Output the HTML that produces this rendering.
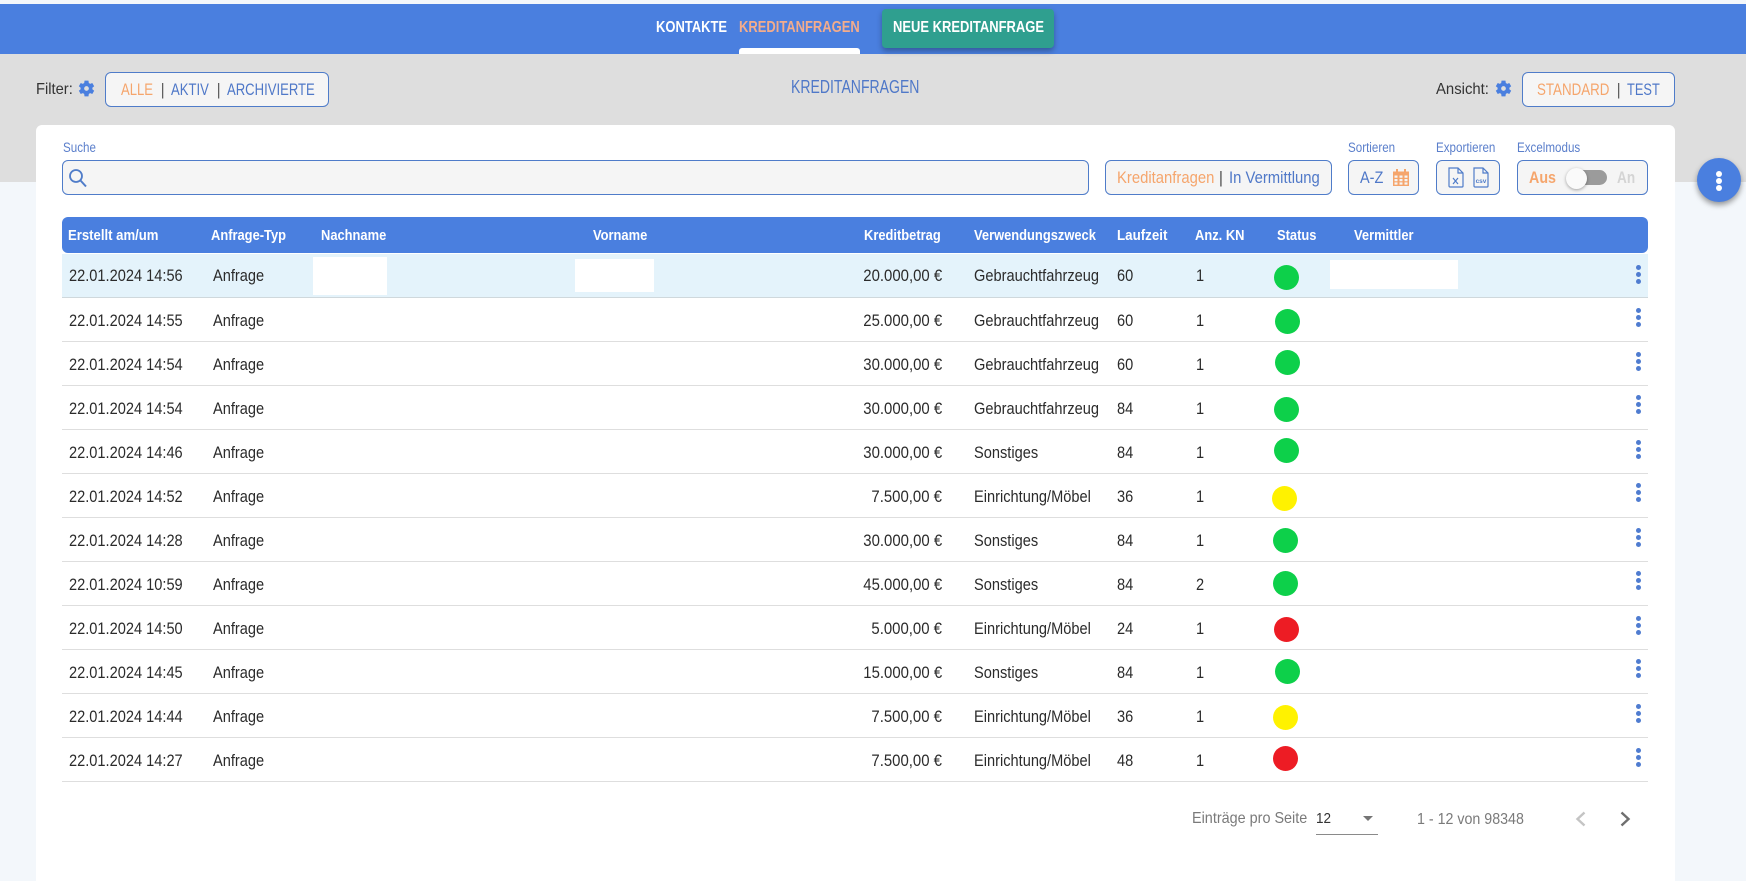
<!DOCTYPE html>
<html lang="de"><head><meta charset="utf-8"><title>Kreditanfragen</title>
<style>
html,body{margin:0;padding:0}
body{width:1746px;height:881px;overflow:hidden;position:relative;background:#f3f7fb;font-family:"Liberation Sans",sans-serif;font-size:15.5px;color:#2b2b2b}
.a{position:absolute;white-space:nowrap}
.t{position:absolute;white-space:nowrap;line-height:20px;height:20px;transform-origin:0 50%}
.btn{position:absolute;box-sizing:border-box;border:1.3px solid #4f7cc9;border-radius:6px;background:#f5f5f5}
.o{color:#f5a56c}.b{color:#4f78c8}.sep{color:#444}
.lab{position:absolute;font-size:13.5px;line-height:16px;color:#5b7fcb;white-space:nowrap;transform:scaleX(.86);transform-origin:0 50%}
.th{position:absolute;top:218px;line-height:36px;color:#fff;font-weight:bold;font-size:15px;white-space:nowrap;transform:scaleX(.86);transform-origin:0 50%}
.r{position:absolute;left:62px;width:1586px;box-sizing:border-box;border-bottom:1.4px solid #dedede;height:44px;font-size:16.5px}
.r span{position:absolute;top:12.5px;line-height:20px;white-space:nowrap;transform:scaleX(.885);transform-origin:0 50%}
.d{left:7px}.ty{left:151px}.r .am{right:706px;transform:scaleX(.905);transform-origin:100% 50%}.vz{left:912px}.lz{left:1055px}.kn{left:1134px}
.c{position:absolute;width:25px;height:25px;border-radius:50%}
.g{background:#0dd04a}.y{background:#fff200}.x{background:#ed1c24}
.dots{position:absolute;left:1635.5px;width:5px;height:19px}
.dots i{position:absolute;left:0;width:5px;height:5px;border-radius:50%;background:#4f7cd0}
.dots i:nth-child(1){top:0}.dots i:nth-child(2){top:7px}.dots i:nth-child(3){top:14px}
.w{position:absolute;background:#fff}
.hb{font-size:17px;transform:scaleX(.77)}
.kb{font-size:16.5px;transform:scaleX(.9)}
</style></head><body>
<div class="a" style="left:0;top:4px;width:1746px;height:50px;background:#4a7fdf"></div>
<div class="a" style="left:0;top:54px;width:1746px;height:128px;background:#dedede"></div>

<div class="t" style="left:656px;top:18px;color:#fff;font-size:16px;font-weight:bold;transform:scaleX(.81)">KONTAKTE</div>
<div class="t" style="left:739px;top:18px;color:#f3ac8c;font-size:16px;font-weight:bold;transform:scaleX(.81)">KREDITANFRAGEN</div>
<div class="a" style="left:739px;top:48px;width:121px;height:6px;background:#fff;border-radius:3px 3px 0 0"></div>
<div class="a" style="left:882px;top:9px;width:172px;height:39px;background:#2f9f8f;border-radius:4px;box-shadow:0 3px 6px rgba(0,0,0,.3)"></div>
<div class="t" style="left:893px;top:18px;color:#fff;font-size:16px;font-weight:bold;transform:scaleX(.81)">NEUE KREDITANFRAGE</div>

<div class="t" style="left:36px;top:80px;font-size:16px;color:#333;transform:scaleX(.92)">Filter:</div>
<svg class="a" style="left:77px;top:79px" width="19" height="19" viewBox="0 0 24 24"><path fill="#4a7fdf" d="M19.4 13a7.5 7.5 0 0 0 0-2l2.300-1.800-2.400-4.200-2.700 1.100a7.600 7.600 0 0 0-1.700-1L14.500 2h-5l-.4 3.100a7.600 7.600 0 0 0-1.700 1L4.700 5 2.300 9.200 4.600 11a7.500 7.500 0 0 0 0 2l-2.300 1.800 2.400 4.200 2.700-1.100c.5.4 1.100.7 1.700 1l.4 3.100h5l.4-3.100c.6-.3 1.200-.6 1.700-1l2.700 1.100 2.400-4.200zM12 15a3 3 0 1 1 0-6 3 3 0 0 1 0 6z"/></svg>
<div class="btn" style="left:105px;top:72px;width:224px;height:35px"></div>
<div class="t hb o" style="left:121px;top:80px">ALLE</div>
<div class="t hb sep" style="left:160.5px;top:80px">|</div>
<div class="t hb b" style="left:171px;top:80px">AKTIV</div>
<div class="t hb sep" style="left:216.5px;top:80px">|</div>
<div class="t hb b" style="left:227px;top:80px">ARCHIVIERTE</div>

<div class="t" style="left:791px;top:77px;font-size:18px;color:#4f78c8;transform:scaleX(.78)">KREDITANFRAGEN</div>

<div class="t" style="left:1436px;top:80px;font-size:16px;color:#333;transform:scaleX(.93)">Ansicht:</div>
<svg class="a" style="left:1494px;top:79px" width="19" height="19" viewBox="0 0 24 24"><path fill="#4a7fdf" d="M19.4 13a7.500 7.500 0 0 0 0-2l2.300-1.800-2.400-4.200-2.700 1.100a7.600 7.600 0 0 0-1.700-1L14.500 2h-5l-.4 3.100a7.600 7.600 0 0 0-1.700 1L4.700 5 2.300 9.200 4.600 11a7.500 7.500 0 0 0 0 2l-2.300 1.800 2.400 4.200 2.700-1.100c.5.4 1.100.7 1.700 1l.4 3.100h5l.4-3.100c.6-.3 1.200-.6 1.700-1l2.700 1.100 2.400-4.200zM12 15a3 3 0 1 1 0-6 3 3 0 0 1 0 6z"/></svg>
<div class="btn" style="left:1522px;top:72px;width:153px;height:35px"></div>
<div class="t hb o" style="left:1537px;top:80px;transform:scaleX(.785)">STANDARD</div>
<div class="t hb sep" style="left:1616.5px;top:80px">|</div>
<div class="t hb b" style="left:1627px;top:80px;transform:scaleX(.755)">TEST</div>

<div class="a" style="left:36px;top:125px;width:1639px;height:756px;background:#fff;border-radius:6px 6px 0 0"></div>

<div class="lab" style="left:63px;top:140px">Suche</div>
<div class="btn" style="left:62px;top:160px;width:1027px;height:35px"></div>
<svg class="a" style="left:68px;top:168px" width="20" height="20" viewBox="0 0 20 20"><circle cx="8" cy="8" r="6" fill="none" stroke="#4f7cc9" stroke-width="1.800"/><path d="M12.500 12.500l5.500 6" stroke="#4f7cc9" stroke-width="2" fill="none"/></svg>

<div class="btn" style="left:1105px;top:160px;width:227px;height:35px"></div>
<div class="t kb o" style="left:1117px;top:168px">Kreditanfragen</div>
<div class="t kb sep" style="left:1219px;top:168px">|</div>
<div class="t kb b" style="left:1229px;top:168px">In Vermittlung</div>

<div class="lab" style="left:1348px;top:140px">Sortieren</div>
<div class="btn" style="left:1348px;top:160px;width:71px;height:35px"></div>
<div class="t" style="left:1360px;top:168px;font-size:16.5px;transform:scaleX(.88)"><span class="b">A-Z</span></div>
<svg class="a" style="left:1393px;top:168px" width="16" height="18" viewBox="0 0 16 18"><path fill="#f5a56c" d="M0 3.500h3V1h2v2.500h6V1h2v2.500h3V18H0zM1.500 7.500v2.200h3V7.500zm5 0v2.200h3V7.500zm5 0v2.200h3V7.500zm-10 3.500v2.200h3V11zm5 0v2.200h3V11zm5 0v2.200h3V11zm-10 3.400v2.200h3v-2.200zm5 0v2.200h3v-2.200zm5 0v2.200h3v-2.200z"/></svg>

<div class="lab" style="left:1436px;top:140px">Exportieren</div>
<div class="btn" style="left:1436px;top:160px;width:64px;height:35px"></div>
<svg class="a" style="left:1448px;top:167px" width="16" height="21" viewBox="0 0 16 21"><path fill="none" stroke="#4f7cc9" stroke-width="1.200" d="M1 1h9l5 5v13a1 1 0 0 1-1 1H2a1 1 0 0 1-1-1zM10 1v5h5M5 11l5 6M10 11l-5 6"/></svg>
<svg class="a" style="left:1473px;top:167px" width="16" height="21" viewBox="0 0 16 21"><path fill="none" stroke="#4f7cc9" stroke-width="1.200" d="M1 1h9l5 5v13a1 1 0 0 1-1 1H2a1 1 0 0 1-1-1zM10 1v5h5"/><text x="8" y="16" font-size="6.500" font-weight="bold" text-anchor="middle" fill="#4f7cc9" font-family="Liberation Sans,sans-serif">csv</text></svg>

<div class="lab" style="left:1517px;top:140px">Excelmodus</div>
<div class="btn" style="left:1517px;top:160px;width:131px;height:35px"></div>
<div class="t" style="left:1529px;top:168px;font-size:17px;font-weight:bold;color:#f5a56c;transform:scaleX(.84)">Aus</div>
<div class="a" style="left:1570px;top:170px;width:37px;height:15px;border-radius:8px;background:#9b9b9b"></div>
<div class="a" style="left:1566px;top:168px;width:21px;height:21px;border-radius:50%;background:#fafafa;box-shadow:0 1px 3px rgba(0,0,0,.35)"></div>
<div class="t" style="left:1617px;top:168px;font-size:17px;font-weight:bold;color:#d4d4d4;transform:scaleX(.8)">An</div>

<div class="a" style="left:1697px;top:158px;width:44px;height:44px;border-radius:50%;background:#4a7fdf;box-shadow:0 3px 6px rgba(0,0,0,.4)"></div>
<div class="a" style="left:1716px;top:171px;width:6px;height:6px;border-radius:50%;background:#fff"></div>
<div class="a" style="left:1716px;top:178px;width:6px;height:6px;border-radius:50%;background:#fff"></div>
<div class="a" style="left:1716px;top:185px;width:6px;height:6px;border-radius:50%;background:#fff"></div>

<div class="a" style="left:62px;top:217px;width:1586px;height:36px;background:#4a7fdf;border-radius:6px"></div>
<div class="th" style="left:68px;transform:scaleX(.875)">Erstellt am/um</div>
<div class="th" style="left:211px">Anfrage-Typ</div>
<div class="th" style="left:321px">Nachname</div>
<div class="th" style="left:593px">Vorname</div>
<div class="th" style="left:864px">Kreditbetrag</div>
<div class="th" style="left:974px">Verwendungszweck</div>
<div class="th" style="left:1117px;transform:scaleX(.89)">Laufzeit</div>
<div class="th" style="left:1195px">Anz. KN</div>
<div class="th" style="left:1277px">Status</div>
<div class="th" style="left:1354px">Vermittler</div>

<div class="r" style="top:253.500px;height:44.500px;background:#e4f3fb;border-bottom-color:#cfd8dc"><span class="d">22.01.2024 14:56</span><span class="ty">Anfrage</span><span class="am">20.000,00 €</span><span class="vz">Gebrauchtfahrzeug</span><span class="lz">60</span><span class="kn">1</span></div>
<div class="r" style="top:298px"><span class="d">22.01.2024 14:55</span><span class="ty">Anfrage</span><span class="am">25.000,00 €</span><span class="vz">Gebrauchtfahrzeug</span><span class="lz">60</span><span class="kn">1</span></div>
<div class="r" style="top:342px"><span class="d">22.01.2024 14:54</span><span class="ty">Anfrage</span><span class="am">30.000,00 €</span><span class="vz">Gebrauchtfahrzeug</span><span class="lz">60</span><span class="kn">1</span></div>
<div class="r" style="top:386px"><span class="d">22.01.2024 14:54</span><span class="ty">Anfrage</span><span class="am">30.000,00 €</span><span class="vz">Gebrauchtfahrzeug</span><span class="lz">84</span><span class="kn">1</span></div>
<div class="r" style="top:430px"><span class="d">22.01.2024 14:46</span><span class="ty">Anfrage</span><span class="am">30.000,00 €</span><span class="vz">Sonstiges</span><span class="lz">84</span><span class="kn">1</span></div>
<div class="r" style="top:474px"><span class="d">22.01.2024 14:52</span><span class="ty">Anfrage</span><span class="am">7.500,00 €</span><span class="vz">Einrichtung/Möbel</span><span class="lz">36</span><span class="kn">1</span></div>
<div class="r" style="top:518px"><span class="d">22.01.2024 14:28</span><span class="ty">Anfrage</span><span class="am">30.000,00 €</span><span class="vz">Sonstiges</span><span class="lz">84</span><span class="kn">1</span></div>
<div class="r" style="top:562px"><span class="d">22.01.2024 10:59</span><span class="ty">Anfrage</span><span class="am">45.000,00 €</span><span class="vz">Sonstiges</span><span class="lz">84</span><span class="kn">2</span></div>
<div class="r" style="top:606px"><span class="d">22.01.2024 14:50</span><span class="ty">Anfrage</span><span class="am">5.000,00 €</span><span class="vz">Einrichtung/Möbel</span><span class="lz">24</span><span class="kn">1</span></div>
<div class="r" style="top:650px"><span class="d">22.01.2024 14:45</span><span class="ty">Anfrage</span><span class="am">15.000,00 €</span><span class="vz">Sonstiges</span><span class="lz">84</span><span class="kn">1</span></div>
<div class="r" style="top:694px"><span class="d">22.01.2024 14:44</span><span class="ty">Anfrage</span><span class="am">7.500,00 €</span><span class="vz">Einrichtung/Möbel</span><span class="lz">36</span><span class="kn">1</span></div>
<div class="r" style="top:738px"><span class="d">22.01.2024 14:27</span><span class="ty">Anfrage</span><span class="am">7.500,00 €</span><span class="vz">Einrichtung/Möbel</span><span class="lz">48</span><span class="kn">1</span></div>

<div class="w" style="left:313px;top:257px;width:74px;height:38px"></div>
<div class="w" style="left:575px;top:259px;width:79px;height:33px"></div>
<div class="w" style="left:1330px;top:260px;width:128px;height:29px"></div>

<div class="c g" style="left:1273.500px;top:264.500px"></div>
<div class="c g" style="left:1274.500px;top:308.500px"></div>
<div class="c g" style="left:1274.500px;top:349.500px"></div>
<div class="c g" style="left:1273.500px;top:396.500px"></div>
<div class="c g" style="left:1273.500px;top:437.500px"></div>
<div class="c y" style="left:1271.500px;top:485.500px"></div>
<div class="c g" style="left:1272.500px;top:527.500px"></div>
<div class="c g" style="left:1272.500px;top:571px"></div>
<div class="c x" style="left:1273.500px;top:616.500px"></div>
<div class="c g" style="left:1274.500px;top:659px"></div>
<div class="c y" style="left:1272.500px;top:704.500px"></div>
<div class="c x" style="left:1272.500px;top:746px"></div>

<div class="dots" style="top:264.500px"><i></i><i></i><i></i></div>
<div class="dots" style="top:307.500px"><i></i><i></i><i></i></div>
<div class="dots" style="top:351.500px"><i></i><i></i><i></i></div>
<div class="dots" style="top:394.500px"><i></i><i></i><i></i></div>
<div class="dots" style="top:439.500px"><i></i><i></i><i></i></div>
<div class="dots" style="top:482.500px"><i></i><i></i><i></i></div>
<div class="dots" style="top:527.500px"><i></i><i></i><i></i></div>
<div class="dots" style="top:570.500px"><i></i><i></i><i></i></div>
<div class="dots" style="top:615.500px"><i></i><i></i><i></i></div>
<div class="dots" style="top:658.500px"><i></i><i></i><i></i></div>
<div class="dots" style="top:703.500px"><i></i><i></i><i></i></div>
<div class="dots" style="top:747.500px"><i></i><i></i><i></i></div>

<div class="t" style="left:1192px;top:808.500px;font-size:16px;color:#7a7a7a;transform:scaleX(.9)">Einträge pro Seite</div>
<div class="t" style="left:1316px;top:809px;font-size:15px;color:#333;transform:scaleX(.9)">12</div>
<div class="a" style="left:1316px;top:834px;width:62px;height:1px;background:#8a8a8a"></div>
<div class="a" style="left:1363px;top:816px;width:0;height:0;border-left:5px solid transparent;border-right:5px solid transparent;border-top:5px solid #757575"></div>
<div class="t" style="left:1417px;top:810px;font-size:16px;color:#7a7a7a;transform:scaleX(.89)">1 - 12 von 98348</div>
<svg class="a" style="left:1574px;top:810px" width="14" height="18" viewBox="0 0 14 18"><path d="M10.500 2.500L3.500 9l7 6.500" fill="none" stroke="#c4c4c4" stroke-width="2.400"/></svg>
<svg class="a" style="left:1618px;top:810px" width="14" height="18" viewBox="0 0 14 18"><path d="M3.500 2.500l7 6.500-7 6.500" fill="none" stroke="#6f6f6f" stroke-width="2.400"/></svg>
</body></html>
